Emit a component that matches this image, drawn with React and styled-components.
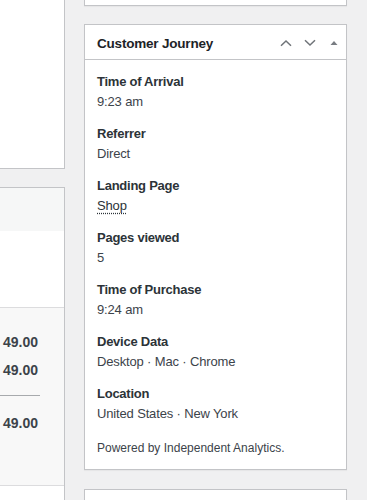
import styled, { createGlobalStyle } from "styled-components";

const GlobalStyle = createGlobalStyle`
  *, *::before, *::after { box-sizing: border-box; }
  html, body {
    margin: 0;
    padding: 0;
    background: #f0f0f1;
  }
  body {
    font-family: "Liberation Sans", Arial, sans-serif;
    color: #1d2327;
    overflow: hidden;
  }
`;

const Page = styled.div`
  display: flex;
  height: 500px;
  overflow: hidden;
  background: #f0f0f1;
`;

const MainColumn = styled.div`
  width: 65px;
  flex: none;
  display: flex;
  flex-direction: column;
  gap: 18px;
`;

const SideColumn = styled.div`
  flex: 1;
  display: flex;
  flex-direction: column;
  padding: 0 20px 0 19px;
`;

const LeftPanel = styled.div`
  flex: none;
  background: #fff;
  border: 1px solid #c3c4c7;
  border-left: none;
  border-top: ${(p) => (p.$clipTop ? "none" : "1px solid #c3c4c7")};
  height: ${(p) => (p.$height ? `${p.$height}px` : "auto")};
  display: flex;
  flex-direction: column;
`;

const ItemsHeader = styled.div`
  height: 43px;
  background: #f6f7f7;
`;

const ItemsBody = styled.div`
  height: 76px;
  background: #fff;
`;

const Totals = styled.div`
  background: #f8f8f8;
  border-top: 1px solid #dcdcde;
  border-bottom: 1px solid #dcdcde;
  padding: 20px 0 48px;
`;

const TotalRow = styled.div`
  height: 28px;
  line-height: 28px;
  padding-right: 26px;
  text-align: right;
  font-size: 14px;
  font-weight: 700;
  color: #3c434a;
`;

const TotalDivider = styled.div`
  width: 40px;
  height: 1px;
  background: #a7aaad;
  margin: 11px 0 13px;
`;

const Postbox = styled.div`
  flex: none;
  background: #fff;
  border: 1px solid #c3c4c7;
  border-top: ${(p) => (p.$clipTop ? "none" : "1px solid #c3c4c7")};
  box-shadow: 0 1px 1px rgba(0, 0, 0, 0.04);
  margin-bottom: ${(p) => p.$gap || 0}px;
  height: ${(p) => (p.$height ? `${p.$height}px` : "auto")};
`;

const Header = styled.div`
  display: flex;
  align-items: center;
  height: 35px;
  padding: 2px 0 0 12px;
  border-bottom: 1px solid #c3c4c7;
`;

const Title = styled.h2`
  flex: 1;
  margin: 0;
  font-size: 13.5px;
  font-weight: 700;
  letter-spacing: -0.2px;
  color: #1d2327;
`;

const HandleButton = styled.button`
  flex: none;
  width: 24px;
  height: 100%;
  padding: 0;
  border: none;
  background: transparent;
  display: flex;
  align-items: center;
  justify-content: center;
  color: ${(p) => p.$tone || "#6f7378"};
`;

const Body = styled.div`
  padding: 12px 12px 12px;
`;

const Item = styled.div`
  margin-bottom: 12px;

  &:last-of-type {
    margin-bottom: 0;
  }
`;

const Label = styled.div`
  font-size: 13px;
  line-height: 20px;
  font-weight: 700;
  letter-spacing: -0.25px;
  color: #2c3338;
`;

const Value = styled.div`
  font-size: 13px;
  line-height: 20px;
  letter-spacing: -0.15px;
  color: #3c434a;
`;

const PageLink = styled.span`
  color: #2c3338;
  text-decoration: underline dotted #2c3338;
  text-underline-offset: 3px;
`;

const Credit = styled.p`
  margin: 15px 0 0;
  font-size: 12px;
  line-height: 18px;
  color: #3c434a;
`;

const ChevronUp = () => (
  <svg width="12" height="8" viewBox="0 0 12 8" fill="none">
    <path d="M1 6.8 L6 2 L11 6.8" stroke="currentColor" strokeWidth="1.5" />
  </svg>
);

const ChevronDown = () => (
  <svg width="12" height="8" viewBox="0 0 12 8" fill="none">
    <path d="M1 1.2 L6 6 L11 1.2" stroke="currentColor" strokeWidth="1.5" />
  </svg>
);

const Caret = () => (
  <svg width="8" height="6" viewBox="0 0 8 6">
    <polygon points="0.5,5 4,1 7.5,5" fill="currentColor" />
  </svg>
);

const journey = [
  { label: "Time of Arrival", value: "9:23 am" },
  { label: "Referrer", value: "Direct" },
  { label: "Landing Page", value: "Shop", link: true },
  { label: "Pages viewed", value: "5" },
  { label: "Time of Purchase", value: "9:24 am" },
  { label: "Device Data", value: "Desktop · Mac · Chrome" },
  { label: "Location", value: "United States · New York" },
];

const App = () => {
  return (
    <>
      <GlobalStyle />
      <Page>
        <MainColumn>
          <LeftPanel $clipTop $height={169} />
          <LeftPanel $height={400}>
            <ItemsHeader />
            <ItemsBody />
            <Totals>
              <TotalRow>49.00</TotalRow>
              <TotalRow>49.00</TotalRow>
              <TotalDivider />
              <TotalRow>49.00</TotalRow>
            </Totals>
          </LeftPanel>
        </MainColumn>

        <SideColumn>
          <Postbox $clipTop $height={6} $gap={18} />
          <Postbox $gap={19}>
            <Header>
              <Title>Customer Journey</Title>
              <HandleButton aria-label="Move up">
                <ChevronUp />
              </HandleButton>
              <HandleButton aria-label="Move down">
                <ChevronDown />
              </HandleButton>
              <HandleButton aria-label="Toggle panel" $tone="#787c82">
                <Caret />
              </HandleButton>
            </Header>
            <Body>
              {journey.map((item) => (
                <Item key={item.label}>
                  <Label>{item.label}</Label>
                  <Value>
                    {item.link ? <PageLink>{item.value}</PageLink> : item.value}
                  </Value>
                </Item>
              ))}
              <Credit>Powered by Independent Analytics.</Credit>
            </Body>
          </Postbox>
          <Postbox $height={60} />
        </SideColumn>
      </Page>
    </>
  );
};

export default App;
